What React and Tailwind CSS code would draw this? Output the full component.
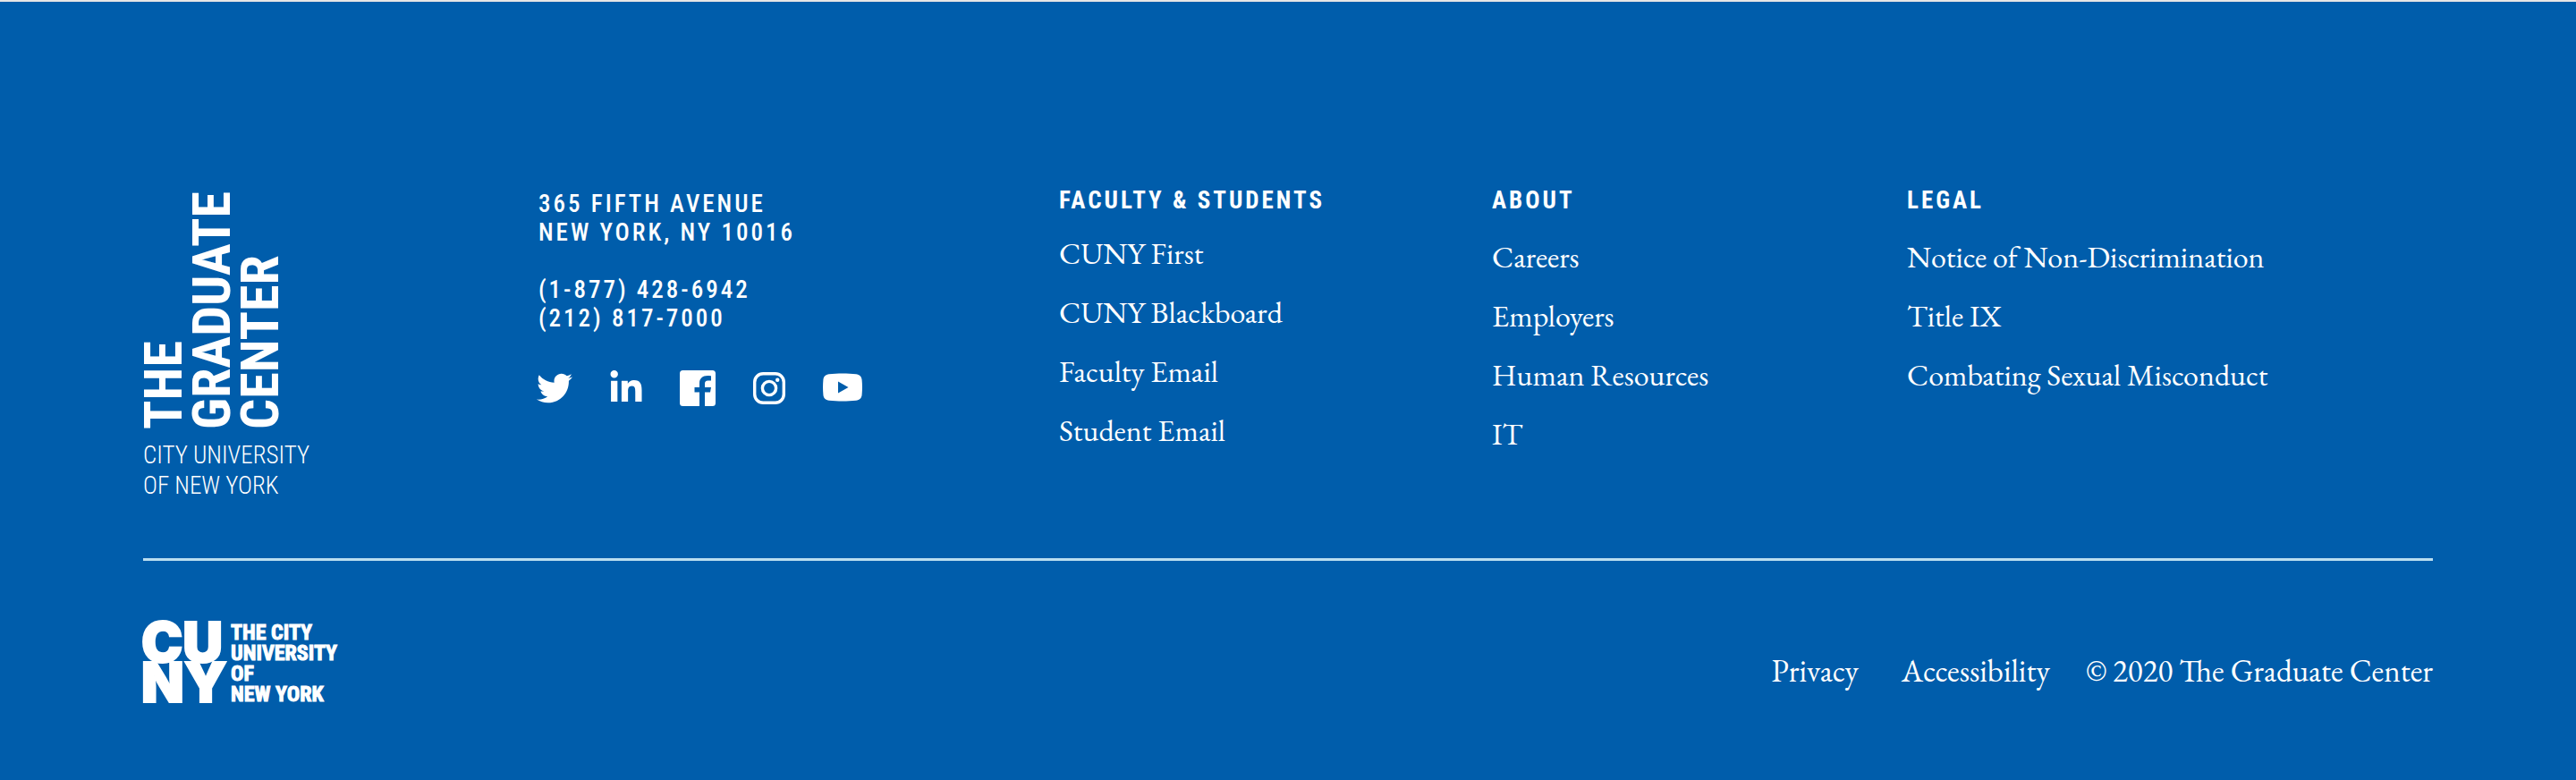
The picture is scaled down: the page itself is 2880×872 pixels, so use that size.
import { FaLinkedinIn, FaTwitter } from "react-icons/fa";

function FacebookIcon() {
  return (
    <svg viewBox="0 0 40 40" className="size-10" fill="currentColor" aria-hidden="true">
      <path d="M3.500 0h33A3.500 3.500 0 0 1 40 3.500v33a3.500 3.500 0 0 1-3.500 3.500H28V24.500h6l1-5.500h-7v-4c0-2.200 1-3.500 3.500-3.500H35V6.300c-1-.2-2.600-.3-4-.3-5.600 0-9 3-9 8.500V19h-5.500v5.500H22V40H3.500A3.500 3.500 0 0 1 0 36.500v-33A3.500 3.500 0 0 1 3.500 0z" />
    </svg>
  );
}

function InstagramIcon() {
  return (
    <svg viewBox="0 0 40 40" className="size-10" fill="none" stroke="currentColor" strokeWidth="3.400" aria-hidden="true">
      <rect x="3.700" y="3.700" width="32.600" height="32.600" rx="9.500" />
      <circle cx="20" cy="20" r="7.600" />
      <circle cx="29.200" cy="10.800" r="2.200" fill="currentColor" stroke="none" />
    </svg>
  );
}

function YoutubeIcon() {
  return (
    <svg viewBox="0 0 44 40" className="h-10 w-11" fill="currentColor" aria-hidden="true">
      <path
        fillRule="evenodd"
        d="M7 4.300C16 3.300 28 3.300 37 4.300c4 .4 6.300 2.600 6.600 6.500.5 5.500.5 10.900 0 16.400-.3 3.900-2.600 6.100-6.600 6.500-9 .9-21 .9-30 0-4-.4-6.300-2.600-6.600-6.500-.5-5.500-.5-10.900 0-16.400C.7 6.900 3 4.700 7 4.300zM17 12.500v13L28.500 19z"
      />
    </svg>
  );
}

const social = [
  { label: "Twitter", icon: <FaTwitter className="size-10" /> },
  { label: "LinkedIn", icon: <FaLinkedinIn className="size-10" /> },
  { label: "Facebook", icon: <FacebookIcon /> },
  { label: "Instagram", icon: <InstagramIcon /> },
  { label: "YouTube", icon: <YoutubeIcon /> },
];

const columns = [
  {
    title: "Faculty & Students",
    gap: "mt-6",
    links: ["CUNY First", "CUNY Blackboard", "Faculty Email", "Student Email"],
  },
  {
    title: "About",
    gap: "mt-7",
    links: ["Careers", "Employers", "Human Resources", "IT"],
  },
  {
    title: "Legal",
    gap: "mt-7",
    links: ["Notice of Non-Discrimination", "Title IX", "Combating Sexual Misconduct"],
  },
];

function GraduateCenterLogo() {
  return (
    <a href="#home" className="mt-1 block w-fit">
      <span className="-ml-1 block w-fit rotate-180 text-[60px] leading-[54px] font-bold [writing-mode:vertical-rl]">
        THE
        <br />
        GRADUATE
        <br />
        CENTER
      </span>
      <span className="mt-3 block text-[27px] leading-[34px] font-light">
        CITY UNIVERSITY
        <br />
        OF NEW YORK
      </span>
    </a>
  );
}

function CunyLogo() {
  return (
    <a href="#cuny" aria-label="The City University of New York" className="block">
      <svg viewBox="0 0 220 94" className="h-[94px] w-[220px] overflow-visible" fill="currentColor" stroke="currentColor">
        <g className="font-['Inter','Liberation_Sans',sans-serif] text-[62px] font-black" strokeWidth="2">
          <text x="-2" y="47">CU</text>
          <text x="-2" y="92">NY</text>
        </g>
        <g className="text-[24px] font-bold" strokeWidth="1">
          <text x="98" y="22">THE CITY</text>
          <text x="98" y="45">UNIVERSITY</text>
          <text x="98" y="68">OF</text>
          <text x="98" y="91">NEW YORK</text>
        </g>
      </svg>
    </a>
  );
}

export default function App() {
  return (
    <footer className="min-h-screen border-t-2 border-[#e6e6e6] bg-[#005dab] px-40 pt-52 pb-20 font-['Roboto_Condensed','Liberation_Sans',sans-serif] text-white">
      <div className="grid grid-cols-[442fr_582fr_484fr_464fr_588fr] border-b-[3px] border-[#b9def0] pb-16">
        <GraduateCenterLogo />

        <div className="pt-0.5">
          <address className="text-[27px] leading-8 font-medium tracking-[3px] uppercase not-italic">
            365 Fifth Avenue
            <br />
            New York, NY 10016
            <br />
            <br />
            (1-877) 428-6942
            <br />
            (212) 817-7000
          </address>
          <ul className="mt-[42px] -ml-0.5 flex gap-10">
            {social.map((item) => (
              <li key={item.label}>
                <a href="#social" aria-label={item.label} className="block">
                  {item.icon}
                </a>
              </li>
            ))}
          </ul>
        </div>

        {columns.map((column) => (
          <nav key={column.title} aria-label={column.title}>
            <h2 className="text-[27px] leading-7 font-bold tracking-[3px] uppercase">{column.title}</h2>
            <ul className={`${column.gap} flex flex-col gap-6 font-['EB_Garamond','Liberation_Serif',serif] text-[34px] leading-[42px]`}>
              {column.links.map((link) => (
                <li key={link}>
                  <a href="#link">{link}</a>
                </li>
              ))}
            </ul>
          </nav>
        ))}
      </div>

      <div className="flex justify-between pt-[66px]">
        <CunyLogo />
        <div className="mt-9 flex font-['EB_Garamond','Liberation_Serif',serif] text-[35px] leading-[42px]">
          <a href="#privacy" className="mr-12">
            Privacy
          </a>
          <a href="#accessibility" className="mr-10">
            Accessibility
          </a>
          <p className="[font-variant-ligatures:discretionary-ligatures]">© 2020 The Graduate Center</p>
        </div>
      </div>
    </footer>
  );
}
